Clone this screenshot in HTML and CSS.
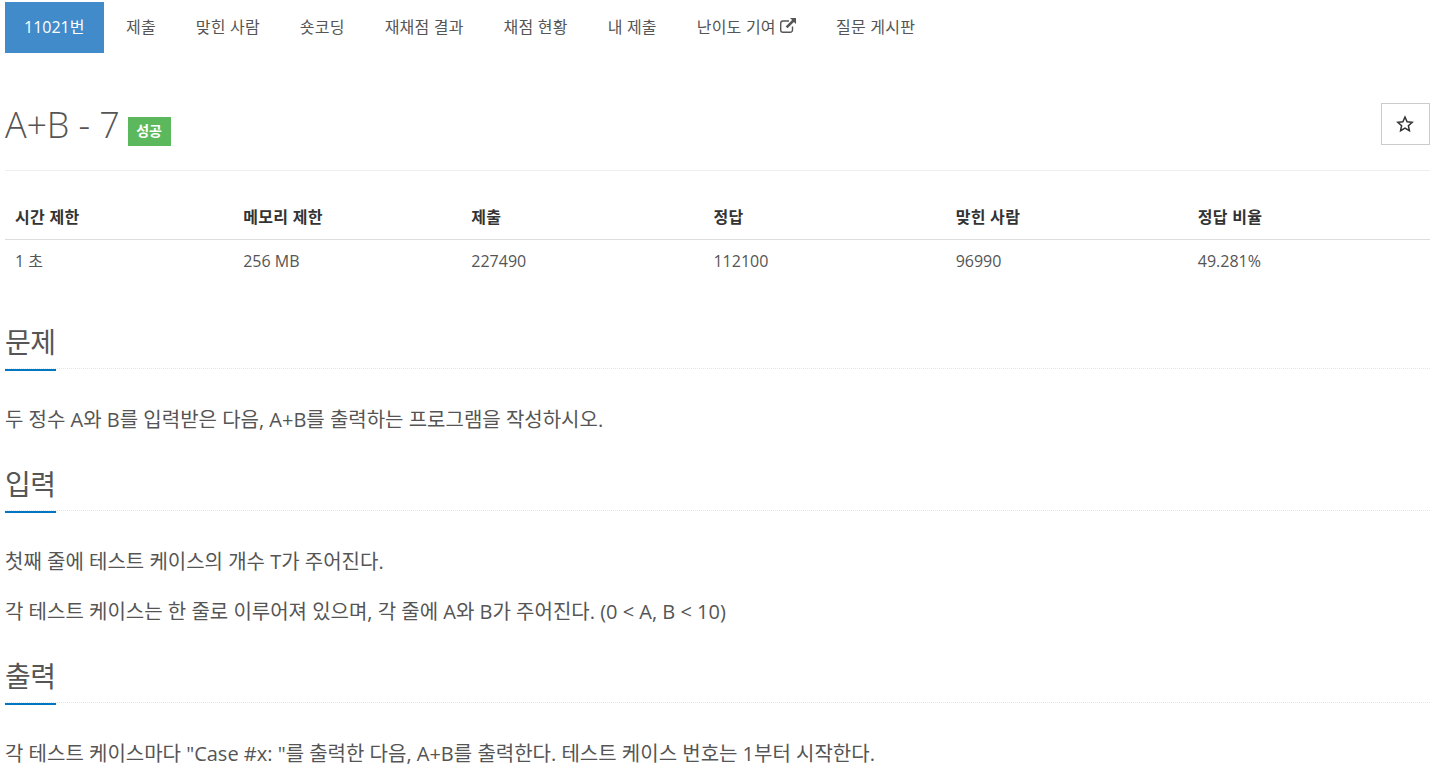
FILE: index.html
```html
<!DOCTYPE html>
<html lang="ko">
<head>
    <meta charset="UTF-8">
    <meta name="viewport" content="width=device-width, initial-scale=1.0">
    <title>A+B - 7</title>
    <link rel="stylesheet" href="styles.css">
</head>
<body>
    <ul class="nav">
        <li class="active"><a href="#">11021번</a></li>
        <li><a href="#">제출</a></li>
        <li><a href="#">맞힌 사람</a></li>
        <li><a href="#">숏코딩</a></li>
        <li><a href="#">재채점 결과</a></li>
        <li><a href="#">채점 현황</a></li>
        <li><a href="#">내 제출</a></li>
        <li><a href="#">난이도 기여
            <svg class="ext-icon" viewBox="0 0 16 15"><path d="M12.500 8.500v3.500a2.300 2.300 0 0 1-2.300 2.300H3a2.300 2.300 0 0 1-2.300-2.300V5.300A2.300 2.300 0 0 1 3 3h6" fill="none" stroke="currentColor" stroke-width="1.400"/><path d="M10 0h6v6l-2.100-2.100-6.400 6.400-1.800-1.800 6.400-6.400z" fill="currentColor"/></svg>
        </a></li>
        <li><a href="#">질문 게시판</a></li>
    </ul>

    <div class="page-header">
        <h1>A+B - 7 <span class="label">성공</span></h1>
        <button class="star-btn">
            <svg viewBox="0 0 18 18" width="18" height="18"><path d="M9 2l2.100 4.700 5.100.6-3.800 3.400 1 5-4.400-2.500-4.400 2.500 1-5-3.800-3.400 5.100-.6z" fill="none" stroke="#333" stroke-width="1.500"/></svg>
        </button>
    </div>

    <table class="info">
        <thead>
            <tr>
                <th class="w1">시간 제한</th>
                <th class="w1">메모리 제한</th>
                <th class="w2">제출</th>
                <th class="w2">정답</th>
                <th class="w2">맞힌 사람</th>
                <th class="w2">정답 비율</th>
            </tr>
        </thead>
        <tbody>
            <tr>
                <td>1 초</td>
                <td>256 MB</td>
                <td>227490</td>
                <td>112100</td>
                <td>96990</td>
                <td>49.281%</td>
            </tr>
        </tbody>
    </table>

    <section>
        <div class="headline"><h2>문제</h2></div>
        <p>두 정수 A와 B를 입력받은 다음, A+B를 출력하는 프로그램을 작성하시오.</p>
    </section>

    <section>
        <div class="headline"><h2>입력</h2></div>
        <p>첫째 줄에 테스트 케이스의 개수 T가 주어진다.</p>
        <p>각 테스트 케이스는 한 줄로 이루어져 있으며, 각 줄에 A와 B가 주어진다. (0 &lt; A, B &lt; 10)</p>
    </section>

    <section>
        <div class="headline"><h2>출력</h2></div>
        <p>각 테스트 케이스마다 "Case #x: "를 출력한 다음, A+B를 출력한다. 테스트 케이스 번호는 1부터 시작한다.</p>
    </section>
</body>
</html>
```

FILE: styles.css
```css
html { overflow: hidden; }
body { margin: 0; padding: 2px 15px 0 5px; font-family: "Open Sans", "Noto Sans CJK KR", sans-serif; font-size: 16px; color: #555; background: #fff; }
a { color: inherit; text-decoration: none; }

.nav { display: flex; list-style: none; margin: 0; padding: 0; }
.nav a { display: block; padding: 15px 20px; line-height: 21px; letter-spacing: .2px; white-space: nowrap; }
.nav .active { margin-right: 1.500px; }
.nav .active a { padding: 15px 20px 15px 19px; background: #428bca; color: #fff; letter-spacing: 0; }
.ext-icon { width: 16px; height: 15px; vertical-align: 0; }

.page-header { display: flex; justify-content: space-between; align-items: flex-start; margin-top: 47px; height: 70px; border-bottom: 1px solid #eee; }
h1 { margin: 0; font-size: 36px; font-weight: 300; line-height: 50px; letter-spacing: -.15px; }
.label { display: inline-block; vertical-align: 2px; margin-left: -1px; padding: 7px 8.500px 8px; background: #5cb85c; color: #fff; font-size: 14px; font-weight: 700; line-height: 14px; letter-spacing: 0; }
.star-btn { display: flex; align-items: center; justify-content: center; width: 49px; height: 42px; margin-top: 3px; padding: 0 2px 0 0; background: #fff; border: 1px solid #ccc; }

.info { width: 100%; margin: 24px 0 38px; border-collapse: collapse; table-layout: fixed; }
.info th { box-sizing: border-box; padding: 10px; line-height: 24px; text-align: left; font-weight: 700; letter-spacing: .3px; color: #333; border-bottom: 1px solid #ddd; }
.info td { padding: 9px 10px 11px; line-height: 24px; }
.w1 { width: 228px; }
.w2 { width: 242px; }

.headline { display: flex; margin-top: 29px; border-bottom: 1px dotted #e5e5e5; }
h2 { margin: 0 0 -3px; padding-bottom: 7px; font-size: 28px; font-weight: 400; line-height: 40px; letter-spacing: -.5px; border-bottom: 2px solid #0076c0; }
p { margin: 0 0 20px; font-size: 20px; line-height: 30px; }
.headline + p { margin-top: 36px; }
```
